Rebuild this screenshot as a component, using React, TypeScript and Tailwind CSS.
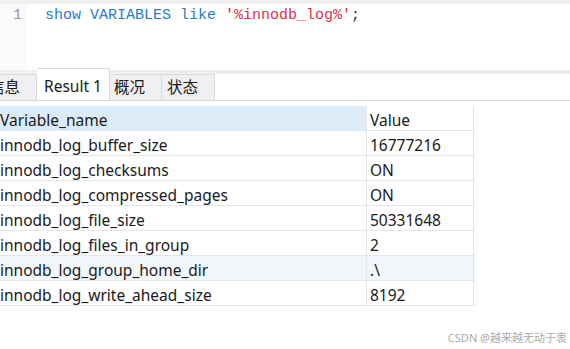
const rows: [string, string][] = [
  ["innodb_log_buffer_size", "16777216"],
  ["innodb_log_checksums", "ON"],
  ["innodb_log_compressed_pages", "ON"],
  ["innodb_log_file_size", "50331648"],
  ["innodb_log_files_in_group", "2"],
  ["innodb_log_group_home_dir", ".\\"],
  ["innodb_log_write_ahead_size", "8192"],
];

const ui = { fontFamily: '"Noto Sans", "Noto Sans CJK SC", sans-serif' };

export default function App() {
  return (
    <div className="relative w-[570px] h-[349px] overflow-hidden bg-white text-[#1a1a1a]" style={ui}>
      <div className="h-[4px] bg-[#f0f0f0]" />

      {/* editor */}
      <div className="flex h-[66px]">
        <div className="w-[27px] bg-[#fafafa] text-right pr-[5px] pt-[1px] text-[15px] text-[#999]" style={{ fontFamily: '"Liberation Mono", monospace' }}>
          1
        </div>
        <div className="pl-[18px] pt-[1px] text-[15px] leading-[22px]" style={{ fontFamily: '"Liberation Mono", monospace' }}>
          <span className="text-[#2a7ad0]">show VARIABLES like </span>
          <span className="text-[#d7344c]">'%innodb_log%'</span>
          <span className="text-[#333]">;</span>
        </div>
      </div>

      <div className="h-[4px] bg-[#f0f0f0]" />

      {/* tabs */}
      <div className="flex items-end h-[27px] border-b border-[#d9d9d9] text-[15.5px]">
        <div className="w-[37px] h-[26px] flex items-center justify-end pr-[16px] bg-[#f0f0f0] border-r border-t border-[#d9d9d9] whitespace-nowrap overflow-hidden">信息</div>
        <div className="relative w-[73px] h-[32px] flex items-center justify-center pt-[4px] bg-white border-t border-r border-[#d9d9d9]">Result 1</div>
        <div className="w-[52px] h-[26px] flex items-center pl-[4px] bg-[#f0f0f0] border-r border-t border-[#d9d9d9]">概况</div>
        <div className="w-[53px] h-[26px] flex items-center pl-[5px] bg-[#f0f0f0] border-r border-t border-[#d9d9d9]">状态</div>
      </div>

      {/* grid */}
      <div className="mt-[5px] -ml-[3px] w-[478px] text-[15.5px]">
        <div className="flex h-[25px] border-b border-[#e6e6e6]">
          <div className="w-[370px] flex items-center pt-[5px] px-[3px] bg-[#dcebf8] border-r border-[#e6e6e6]">Variable_name</div>
          <div className="w-[107px] flex items-center pt-[5px] px-[3px] border-r border-[#e6e6e6]">Value</div>
        </div>
        {rows.map(([name, value], i) => (
          <div key={i} className={`flex h-[25px] border-b border-[#e6e6e6] ${i === 5 ? "bg-[#f2f7fc]" : ""}`}>
            <div className="w-[370px] flex items-center pt-[5px] px-[3px] border-r border-[#e6e6e6]">{name}</div>
            <div className="w-[107px] flex items-center pt-[5px] px-[3px] border-r border-[#e6e6e6]">{value}</div>
          </div>
        ))}
      </div>

      <div className="absolute right-[3px] bottom-[3px] text-[11px] text-[#aaa]">CSDN @越来越无动于衷</div>
    </div>
  );
}
